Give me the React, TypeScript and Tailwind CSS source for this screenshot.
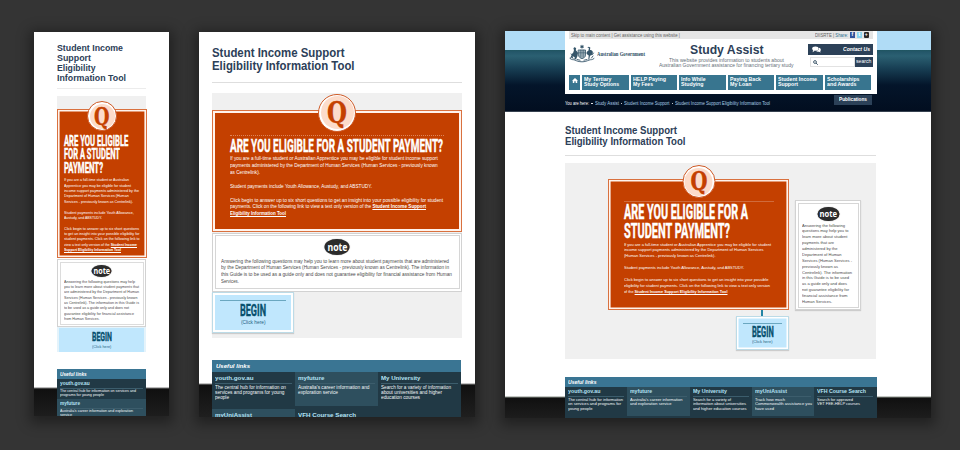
import React, { useLayoutEffect, useRef } from 'react';

// A single line of copy, condensed or widened to an exact measure.
function Fit({ w, className = '', inner = '', children }: { w: number; className?: string; inner?: string; children: React.ReactNode }) {
  const ref = useRef<HTMLSpanElement>(null);
  useLayoutEffect(() => {
    const el = ref.current;
    if (!el) return;
    el.style.transform = 'none';
    const natural = el.getBoundingClientRect().width;
    if (natural > 0) el.style.transform = `scaleX(${w / natural})`;
  }, [w]);
  return (
    <div className={`shrink-0 whitespace-nowrap ${className}`} style={{ width: w }}>
      <span ref={ref} className={`inline-block origin-left ${inner}`}>{children}</span>
    </div>
  );
}

type L = [string, number];

function Lines({ lines, className }: { lines: L[]; className: string }) {
  return (
    <div className={className}>
      {lines.map(([t, w], i) => {
        if (!t) return <div key={i}>&nbsp;</div>;
        const parts = t.split('*');
        return (
          <Fit key={i} w={w}>
            {parts[0]}
            {parts[1] && <b className="underline decoration-[0.5px] underline-offset-[0.5px]">{parts[1]}</b>}
            {parts[2]}
          </Fit>
        );
      })}
    </div>
  );
}

function Q({ className, glyph, w }: { className: string; glyph: string; w: number }) {
  return (
    <div className={`absolute left-1/2 flex -translate-x-1/2 justify-center rounded-full border border-[#cf5a26] bg-white p-[1.5px] ${className}`}>
      <div className="flex h-full w-full items-center justify-center rounded-full bg-[#fcdccb]">
        <Fit w={w} className={`font-['DejaVu_Serif',serif] font-bold text-[#c44000] [-webkit-text-stroke:0.4px_#c44000] ${glyph}`}>Q</Fit>
      </div>
    </div>
  );
}

function Note({ className, w }: { className: string; w: number }) {
  return (
    <div className={`mx-auto flex items-center justify-center rounded-[50%] bg-[#2b2b2b] font-['Open_Sans',sans-serif] font-bold text-white shadow-[0_0_1px_#777] ${className}`}>
      <Fit w={w} className="-translate-y-[0.5px]">note</Fit>
    </div>
  );
}

const heading = "font-['Liberation_Sans_Narrow',Roboto,sans-serif] font-bold text-white [-webkit-text-stroke:0.45px_white]";
const begin = "font-['Liberation_Sans_Narrow',Roboto,sans-serif] font-bold text-[#07506e] [-webkit-text-stroke:0.4px_#07506e]";
const orange = 'relative border border-[#d9713f] bg-[#c44000] shadow-[inset_0_0_0_1.6px_#fff3ec]';
const noteBox = 'border border-[#d2d2d2] bg-white p-[1.5px]';

function LinkCell({ title, tw, lines, light, className, ts, ds }: { title: string; tw: number; lines: L[]; light?: boolean; className: string; ts: string; ds: string }) {
  return (
    <div className={`${light ? 'bg-[#2e4f5e]' : 'bg-[#213945]'} shrink-0 overflow-hidden pl-[3px] ${className}`}>
      <Fit w={tw} className={`font-bold text-[#b4e2f4] ${ts}`}>{title}</Fit>
      <div className="mr-[3px] h-px bg-[#3c5d6c]" />
      <Lines lines={lines} className={`text-[#f2f6f8] ${ds}`} />
    </div>
  );
}

function Phone() {
  return (
    <section className="mt-8 flex h-96 w-[135px] shrink-0 flex-col overflow-hidden bg-white shadow-[0_3px_12px_4px_rgba(0,0,0,0.38)]">
      <div className="ml-[23px] flex h-[337px] w-[90px] shrink-0 flex-col">
        <Lines className="mt-[11.2px] text-[9.4px] font-bold leading-[9.8px] text-[#2c4058]" lines={[['Student Income', 66], ['Support', 34], ['Eligibility', 38.5], ['Information Tool', 69]]} />
        <div className="mt-[5.4px] h-[1.5px] w-[89px] shrink-0 bg-[#ececec]" />
        <div className="mt-[7px] h-[13px] w-[89px] shrink-0 bg-[#f0f0f0]" />
        <div className={`h-[149px] shrink-0 pl-[6px] pt-[24.5px] ${orange}`}>
          <Q className="-top-[9px] h-[30px] w-[30px]" glyph="text-[24px] leading-[21px]" w={15.5} />
          <Lines className={`text-[15px] leading-[13.5px] ${heading}`} lines={[['ARE YOU ELIGIBLE', 64.3], ['FOR A STUDENT', 56], ['PAYMENT?', 39]]} />
          <Lines
            className="mt-[2.2px] text-[4px] leading-[5.34px] text-white"
            lines={[
              ['If you are a full-time student or Australian', 65], ['Apprentice you may be eligible for student', 67], ['income support payments administered by the', 75],
              ['Department of Human Services (Human', 64.7], ['Services - previously known as Centrelink).', 69], ['', 0],
              ['Student payments include Youth Allowance,', 69.7], ['Austudy, and ABSTUDY.', 38], ['', 0],
              ['Click begin to answer up to six short questions', 75], ['to get an insight into your possible eligibility for', 75.5], ['student payments. Click on the following link to', 75.5],
              ['view a text only version of the *Student Income', 73], ['*Support Eligibility Information Tool*', 57],
            ]}
          />
        </div>
        <div className={`mt-px h-[68px] w-[89px] shrink-0 ${noteBox}`}>
          <div className="h-full border border-[#dcdcdc] pl-[3.5px] pt-[2px]">
            <Note className="h-[12px] w-[20px] -translate-x-[1.5px] text-[8px] leading-[8px]" w={16.5} />
            <Lines
              className="mt-[2px] text-[4px] leading-[5.34px] text-[#4a4a4a]"
              lines={[['Answering the following questions may help', 71], ['you to learn more about student payments that', 75], ['are administered by the Department of Human', 75], ['Services (Human Services - previously known', 73.5], ['as Centrelink). The information in this Guide is', 75], ['to be used as a guide only and does not', 65], ['guarantee eligibility for financial assistance', 70], ['from Human Services.', 35.5]]}
            />
          </div>
        </div>
        <div className="flex h-[25px] w-[89px] shrink-0 flex-col items-center border-x-2 border-t border-[#e4f3fb] bg-[#c0e7fd] pt-[3px]">
          <Fit w={20} className={`text-[13.5px] leading-[11px] ${begin}`}>BEGIN</Fit>
          <Fit w={19.3} className="mt-[0.8px] text-[4px] leading-[7px] text-[#25627f]">(Click here)</Fit>
        </div>
      </div>
      <div className="flex-1 bg-[linear-gradient(#fff_0,#fff_18px,#777_19px,#101010_20px,#1d1d1d_47px)] pl-[23px]">
        <div className="h-full w-[89px] overflow-hidden">
          <div className="h-[10px] bg-[#3a7593] pl-[3px]">
            <Fit w={26.7} className="text-[5px] font-bold italic leading-[10px] text-white">Useful links</Fit>
          </div>
          <LinkCell className="h-[20px]" ts="text-[5px] leading-[9px]" ds="text-[3.8px] leading-[4px]" title="youth.gov.au" tw={29.7} lines={[['The central hub for information on services and', 76], ['programs for young people', 44]]} />
          <LinkCell light className="h-[19px]" ts="text-[5px] leading-[9px]" ds="text-[3.8px] leading-[4px]" title="myfuture" tw={20} lines={[["Australia's career information and exploration", 73], ['service', 12]]} />
        </div>
      </div>
    </section>
  );
}

function Tablet() {
  const ts = 'text-[6.2px] leading-[11px]';
  const ds = 'pt-[1px] text-[4.8px] leading-[5px]';
  return (
    <section className="ml-[30px] mt-8 flex h-[385px] w-[276px] shrink-0 flex-col overflow-hidden bg-white shadow-[0_3px_12px_4px_rgba(0,0,0,0.38)]">
      <div className="ml-[13px] flex h-[328px] w-[250px] shrink-0 flex-col">
        <Lines className="mt-[15px] text-[12px] font-bold leading-[13px] text-[#2c4058]" lines={[['Student Income Support', 132.5], ['Eligibility Information Tool', 142.5]]} />
        <div className="mt-[9px] h-px shrink-0 bg-[#dedede]" />
        <div className="mt-[9.5px] h-[245px] shrink-0 bg-[#f0f0f0] pt-[17px]">
          <div className={`h-[122px] pl-[17px] pt-[24.5px] ${orange} shadow-[inset_0_0_0_2px_#fff3ec]`}>
            <Q className="-top-[17px] h-[38px] w-[38px]" glyph="text-[30px] leading-[27px]" w={20} />
            <div className="w-[214px] border-t border-dotted border-[#dd8559]" />
            <Fit w={213} className={`text-[19px] leading-[19px] ${heading}`}>ARE YOU ELIGIBLE FOR A STUDENT PAYMENT?</Fit>
            <Lines
              className="text-[5px] leading-[6.92px] text-white"
              lines={[
                ['If you are a full-time student or Australian Apprentice you may be eligible for student income support', 207.7],
                ['payments administered by the Department of Human Services (Human Services - previously known', 207.7],
                ['as Centrelink).', 30], ['', 0], ['Student payments include Youth Allowance, Austudy, and ABSTUDY.', 142], ['', 0],
                ['Click begin to answer up to six short questions to get an insight into your possible eligibility for student', 213],
                ['payments. Click on the following link to view a text only version of the *Student Income Support', 196],
                ['*Eligibility Information Tool*', 56],
              ]}
            />
          </div>
          <div className={`mt-px h-[59px] ${noteBox}`}>
            <div className="h-full border border-[#d6d6d6] pl-[5.5px] pt-[3px]">
              <Note className="h-[16px] w-[25px] -translate-x-[2.5px] text-[10px] leading-[10px]" w={20} />
              <Lines
                className="mt-[2.5px] text-[5px] leading-[6.92px] text-[#4a4a4a]"
                lines={[['Answering the following questions may help you to learn more about student payments that are administered', 228], ['by the Department of Human Services (Human Services - previously known as Centrelink). The information in', 228], ['this Guide is to be used as a guide only and does not guarantee eligibility for financial assistance from Human', 231], ['Services.', 18]]}
              />
            </div>
          </div>
          <div className="flex h-[41px] w-[82px] flex-col items-center border border-[#bcdbe7] bg-[#c0e7fd] pt-[7px] shadow-[inset_0_0_0_2px_white,0_1px_1px_#ccc]">
            <div className="h-px w-[66px] shrink-0 bg-[#6aa7c0]" />
            <Fit w={26} className={`mt-[1.5px] text-[17px] leading-[17px] ${begin}`}>BEGIN</Fit>
            <Fit w={24.5} className="text-[5px] leading-[7px] text-[#25627f]">(Click here)</Fit>
          </div>
        </div>
      </div>
      <div className="flex-1 bg-[linear-gradient(#fff_0,#fff_23px,#888_24px,#101010_25px,#1f1f1f_57px)] pl-[13px]">
        <div className="h-[57px] w-[249px] overflow-hidden bg-[#213945]">
          <div className="h-[12px] bg-[#3a7593] pl-[4px]">
            <Fit w={34} className="text-[6.2px] font-bold italic leading-[12.5px] text-white">Useful links</Fit>
          </div>
          <div className="grid grid-cols-3 gap-y-[3px]">
            <LinkCell className="h-[34px]" ts={ts} ds={ds} title="youth.gov.au" tw={38.5} lines={[['The central hub for information on', 71], ['services and programs for young', 69.5], ['people', 14]]} />
            <LinkCell light className="h-[34px]" ts={ts} ds={ds} title="myfuture" tw={26.5} lines={[["Australia's career information and", 71.5], ['exploration service', 40]]} />
            <LinkCell className="h-[34px]" ts={ts} ds={ds} title="My University" tw={39.5} lines={[['Search for a variety of information', 70], ['about universities and higher', 61], ['education courses', 39]]} />
            <LinkCell light className="h-[20px]" ts={ts} ds={ds} title="myUniAssist" tw={37} lines={[]} />
            <LinkCell className="h-[20px]" ts={ts} ds={ds} title="VFH Course Search" tw={58} lines={[]} />
          </div>
        </div>
      </div>
    </section>
  );
}

function Crest() {
  return (
    <svg className="h-[19px] w-[26px]" viewBox="0 0 26 19" fill="none" stroke="#35556a" strokeLinecap="round">
      <path d="M13 .4l.6 1.3 1.4-.3-.7 1.3.7 1.1-1.4-.1-.6 1.2-.6-1.2-1.4.1.7-1.1-.7-1.3 1.4.3z" fill="#35556a" stroke="none" />
      <path d="M9.5 6h7v5.2c0 2-2 3-3.500 3.500-1.500-.5-3.500-1.500-3.500-3.500z" fill="#9db0ba" strokeWidth=".8" />
      <path d="M9.500 8.800h7M11.800 6v7M14.200 6v7" strokeWidth=".6" />
      <path d="M5.200 3.200c.8 0 1.500.4 2 1.200L6.700 6c.8 1.200 2 1.500 2.300 3l-.6 3.300-1.400 3-1.800.2.600-2.200-2-1c-1 1.700-2 2.400-3.200 2.300 1.800-1.500 1.700-4.500 3.700-6l.7-2.700-.6-1.300z" fill="#35556a" stroke="none" />
      <path d="M19.800 2.800l-1.600.8 1.700.4-.4 2.600c-1.600.7-2.400 2-1.800 3.500l2 1.400-.4 4h.9l.8-3.800c2.200-.3 3.300-2 2.700-4.200-.7-1-1.800-1.300-2.700-1.400l.3-2.500z" fill="#35556a" stroke="none" />
      <path d="M1 14.500c2 1.800 3.500.8 5 1.600s4 1.700 7 1.700 5-.9 7-1.700 3 .2 5-1.600M3 12.500l1 2M24 12l-1.500 2M8 15.500l3 .7M18 15.500l-3 .7M2 10l1.500 1M24.500 9l-1 1.500" strokeWidth=".9" />
    </svg>
  );
}

const nav: [string, number, string, number][] = [
  ['My Tertiary', 27.5, 'Study Options', 35], ['HELP Paying', 33, 'My Fees', 20], ['Info While', 24.5, 'Studying', 22.5],
  ['Paying Back', 31, 'My Loan', 21.5], ['Student Income', 39, 'Support', 20], ['Scholarships', 32.5, 'and Awards', 29.5],
];

function Desktop() {
  const ts = 'text-[5.4px] leading-[9px]';
  const ds = 'pt-[1px] text-[4.2px] leading-[4.3px]';
  const crumb = "text-[4.6px] leading-[7px] text-[#a9cfe6] underline decoration-[0.5px] underline-offset-[0.5px]";
  return (
    <section className="ml-[30px] mt-[31px] flex h-[387px] w-[426px] shrink-0 flex-col overflow-hidden bg-white shadow-[0_3px_12px_4px_rgba(0,0,0,0.38)]">
      <div className="h-[81px] shrink-0 bg-[linear-gradient(#b0dcf6_0,#b0dcf6_18.500px,#1f5560_19px,#24576a_21px,#2b6072_25px,#173d52_38px,#04152a_54px,#020e20_80px,#69737e_81px)] pl-[60px]">
        <div className="flex h-[63px] w-[312px] flex-col bg-white px-[4px]">
          <div className="flex h-[8px] shrink-0 items-center bg-[#e5e5e5] pl-[2px] pr-[4px] text-[4.7px] leading-[7px] text-[#626262]">
            <Fit w={109}>Skip to main content | Get assistance using this website |</Fit>
            <Fit w={33} className="ml-auto">DIISRTE | <span className="text-[#2b6f8e]">Share:</span></Fit>
            <div className="ml-[2px] flex gap-[1.5px] text-center text-[5px] font-bold leading-[5.500px] text-white">
              <span className="h-[5.5px] w-[5.5px] bg-[#31529a]">f</span>
              <span className="h-[5.5px] w-[5.5px] bg-[#8bd4ee]">t</span>
              <span className="h-[5.5px] w-[5.5px] rounded-[1px] bg-[#2a2525]">+</span>
            </div>
          </div>
          <div className="flex h-[35.500px] shrink-0 pt-[5px]">
            <div className="flex w-[89px] shrink-0">
              <Crest />
              <Fit w={48} className="ml-[2px] mt-[6px] font-['Liberation_Serif',serif] text-[5.5px] font-bold leading-[9px] text-[#294b60]">Australian Government</Fit>
            </div>
            <div className="flex w-[137px] shrink-0 flex-col items-center">
              <Fit w={73.500} className="-mt-[1px] text-[12.500px] font-bold leading-[14px] text-[#2c4058]">Study Assist</Fit>
              <Fit w={115} className="mt-[0.5px] text-[5.800px] leading-[5.600px] text-[#666f78]">This website provides information to students about</Fit>
              <Fit w={134.500} className="text-[5.800px] leading-[5.600px] text-[#666f78]">Australian Government assistance for financing tertiary study</Fit>
            </div>
            <div className="ml-auto w-[65px]">
              <div className="flex h-[11px] items-center bg-[#2c4158] pl-[4px] pr-[3px]">
                <svg className="h-[7px] w-[9px]" viewBox="0 0 9 7" fill="#fff">
                  <ellipse cx="3.400" cy="2.600" rx="3.200" ry="2.200" />
                  <path d="M1 4l-.3 2.200L3 4.600zM6.800 1.800C8.200 2 9 3 8.800 4c0 .5-.3.900-.6 1.200l.5 1.300-1.700-.7c-1.400.1-2.500-.3-3-1 2-.1 3.300-1.200 2.800-3z" />
                </svg>
                <Fit w={27} className="ml-auto text-[5.800px] font-bold italic leading-[11px] text-white">Contact Us</Fit>
              </div>
              <div className="mt-[2px] flex h-[10px]">
                <div className="ml-[2px] flex flex-1 items-center border border-[#e2e2e2] bg-white pl-[1.500px]">
                  <svg className="h-[5px] w-[5px]" viewBox="0 0 5 5" fill="none" stroke="#334e62" strokeWidth=".9"><circle cx="2" cy="2" r="1.400" /><path d="M3 3l1.800 1.800" /></svg>
                </div>
                <div className="flex w-[18.500px] justify-center bg-[#2c4158]">
                  <Fit w={15.500} className="text-[5.500px] leading-[9px] text-white">search</Fit>
                </div>
              </div>
            </div>
          </div>
          <div className="flex h-[15.500px] w-[302px] shrink-0 gap-[2px]">
            <div className="flex w-[11px] shrink-0 items-center justify-center bg-[#38758f] pb-[3px]">
              <svg className="h-[5px] w-[6px]" viewBox="0 0 6 5" fill="#fff"><path d="M3 0l3 2.700h-.8V5H3.700V3.300H2.300V5H.8V2.700H0z" /></svg>
            </div>
            {nav.map(([a, aw, b, bw]) => (
              <div key={a} className="flex-1 bg-[#38758f] pl-[2px] pt-[2.200px] text-[5.700px] font-bold leading-[5.300px] text-white">
                <Fit w={aw}>{a}</Fit>
                <Fit w={bw}>{b}</Fit>
              </div>
            ))}
          </div>
        </div>
        <div className="flex h-[17px] w-[307px] items-start pt-[1px]">
          <div className="mt-[5px] flex items-center gap-[2px]">
            <Fit w={24} className="text-[4.600px] leading-[7px] text-white">You are here:</Fit>
            <i className="h-[1.500px] w-[1.500px] rounded-full bg-white" />
            <Fit w={24} className={crumb}>Study Assist</Fit>
            <i className="h-[1.500px] w-[1.500px] rounded-full bg-white" />
            <Fit w={45.500} className={crumb}>Student Income Support</Fit>
            <i className="h-[1.500px] w-[1.500px] rounded-full bg-white" />
            <Fit w={95} className={crumb}>Student Income Support Eligibility Information Tool</Fit>
          </div>
          <div className="ml-auto flex h-[9.500px] w-[38px] justify-center bg-[#2c4158]">
            <Fit w={28} className="text-[5px] font-bold leading-[9.500px] text-white">Publications</Fit>
          </div>
        </div>
      </div>
      <div className="ml-[60px] flex h-[265px] w-[311px] shrink-0 flex-col">
        <Lines className="mt-[14px] text-[10px] font-bold leading-[10.900px] text-[#2c4058]" lines={[['Student Income Support', 112], ['Eligibility Information Tool', 120.5]]} />
        <div className="mt-[7.200px] h-px shrink-0 bg-[#dedede]" />
        <div className="mt-[7px] flex h-[195.500px] shrink-0 items-start bg-[#f0f0f0] pl-[43px] pt-[16px]">
          <div className="w-[181px]">
            <div className={`h-[130.500px] pl-[15px] pt-[21px] ${orange}`}>
              <Q className="-top-[15px] h-[33px] w-[33px]" glyph="text-[26px] leading-[23px]" w={17} />
              <div className="h-px w-[150px] bg-[#d06b3c]" />
              <Lines className={`pt-[0.500px] text-[20.400px] leading-[19.500px] ${heading}`} lines={[['ARE YOU ELIGIBLE FOR A', 124], ['STUDENT PAYMENT?', 106]]} />
              <Lines
                className="text-[4.400px] leading-[5.870px] text-white"
                lines={[
                  ['If you are a full-time student or Australian Apprentice you may be eligible for student', 147],
                  ['income support payments administered by the Department of Human Services', 139.5],
                  ['(Human Services - previously known as Centrelink).', 91.5], ['', 0],
                  ['Student payments include Youth Allowance, Austudy, and ABSTUDY.', 120], ['', 0],
                  ['Click begin to answer up to six short questions to get an insight into your possible', 144.5],
                  ['eligibility for student payments. Click on the following link to view a text only version', 146],
                  ['of the *Student Income Support Eligibility Information Tool', 103.5],
                ]}
              />
            </div>
            <div className="ml-[153px] h-[6px] w-[2px] bg-[#2385a5]" />
            <div className="ml-auto flex h-[34px] w-[53px] flex-col items-center border border-[#bcdbe7] bg-[#c0e7fd] pt-[6px] shadow-[inset_0_0_0_1.500px_white,0_1px_1px_#ccc]">
              <div className="h-px w-[39px] shrink-0 bg-[#6aa7c0]" />
              <Fit w={21.700} className={`mt-[1.500px] text-[15px] leading-[14px] ${begin}`}>BEGIN</Fit>
              <Fit w={20.500} className="text-[4.400px] leading-[6.500px] text-[#25627f]">(Click here)</Fit>
            </div>
          </div>
          <div className={`ml-[6px] mt-[21px] h-[110px] w-[66px] shadow-[0_1px_1px_#ccc] ${noteBox}`}>
            <div className="h-full border border-[#d6d6d6] pl-[3.500px] pt-[3px]">
              <Note className="h-[14px] w-[21.500px] -translate-x-[1.500px] text-[8.500px] leading-[9px]" w={17.5} />
              <Lines
                className="mt-[2px] text-[4.400px] leading-[5.870px] text-[#4a4a4a]"
                lines={[['Answering the following', 43], ['questions may help you to', 46.5], ['learn more about student', 45.5], ['payments that are', 32], ['administered by the', 35.5], ['Department of Human', 39.5], ['Services (Human Services -', 50], ['previously known as', 36], ['Centrelink). The information', 50], ['in this Guide is to be used', 47], ['as a guide only and does', 45], ['not guarantee eligibility for', 47], ['financial assistance from', 45.5], ['Human Services.', 30]]}
              />
            </div>
          </div>
        </div>
      </div>
      <div className="flex-1 bg-[linear-gradient(#fff_0,#fff_19px,#899088_20px,#101010_21px,#1d1d1d_41px)] pl-[60px]">
        <div className="h-[41px] w-[311.500px] overflow-hidden bg-[#213945]">
          <div className="h-[10px] bg-[#3a7593] pl-[3px]">
            <Fit w={28.500} className="text-[5.200px] font-bold italic leading-[11px] text-white">Useful links</Fit>
          </div>
          <div className="grid grid-cols-5">
            <LinkCell className="h-[29px]" ts={ts} ds={ds} title="youth.gov.au" tw={32.5} lines={[['The central hub for information', 55], ['on services and programs for', 53], ['young people', 24.5]]} />
            <LinkCell light className="h-[29px]" ts={ts} ds={ds} title="myfuture" tw={22} lines={[["Australia's career information", 52.5], ['and exploration service', 41.5]]} />
            <LinkCell className="h-[29px]" ts={ts} ds={ds} title="My University" tw={34} lines={[['Search for a variety of', 38], ['information about universities', 53], ['and higher education courses', 53.5]]} />
            <LinkCell light className="h-[29px]" ts={ts} ds={ds} title="myUniAssist" tw={32} lines={[['Track how much', 30], ['Commonwealth assistance you', 57], ['have used', 19]]} />
            <LinkCell className="h-[29px]" ts={ts} ds={ds} title="VFH Course Search" tw={49} lines={[['Search for approved', 36], ['VET FEE-HELP courses', 43]]} />
          </div>
        </div>
      </div>
    </section>
  );
}

export default function App() {
  return (
    <main className="flex h-[450px] w-[960px] items-start overflow-hidden bg-[#343434] pl-[34px] font-['Liberation_Sans',Arial,sans-serif]">
      <Phone />
      <Tablet />
      <Desktop />
    </main>
  );
}
